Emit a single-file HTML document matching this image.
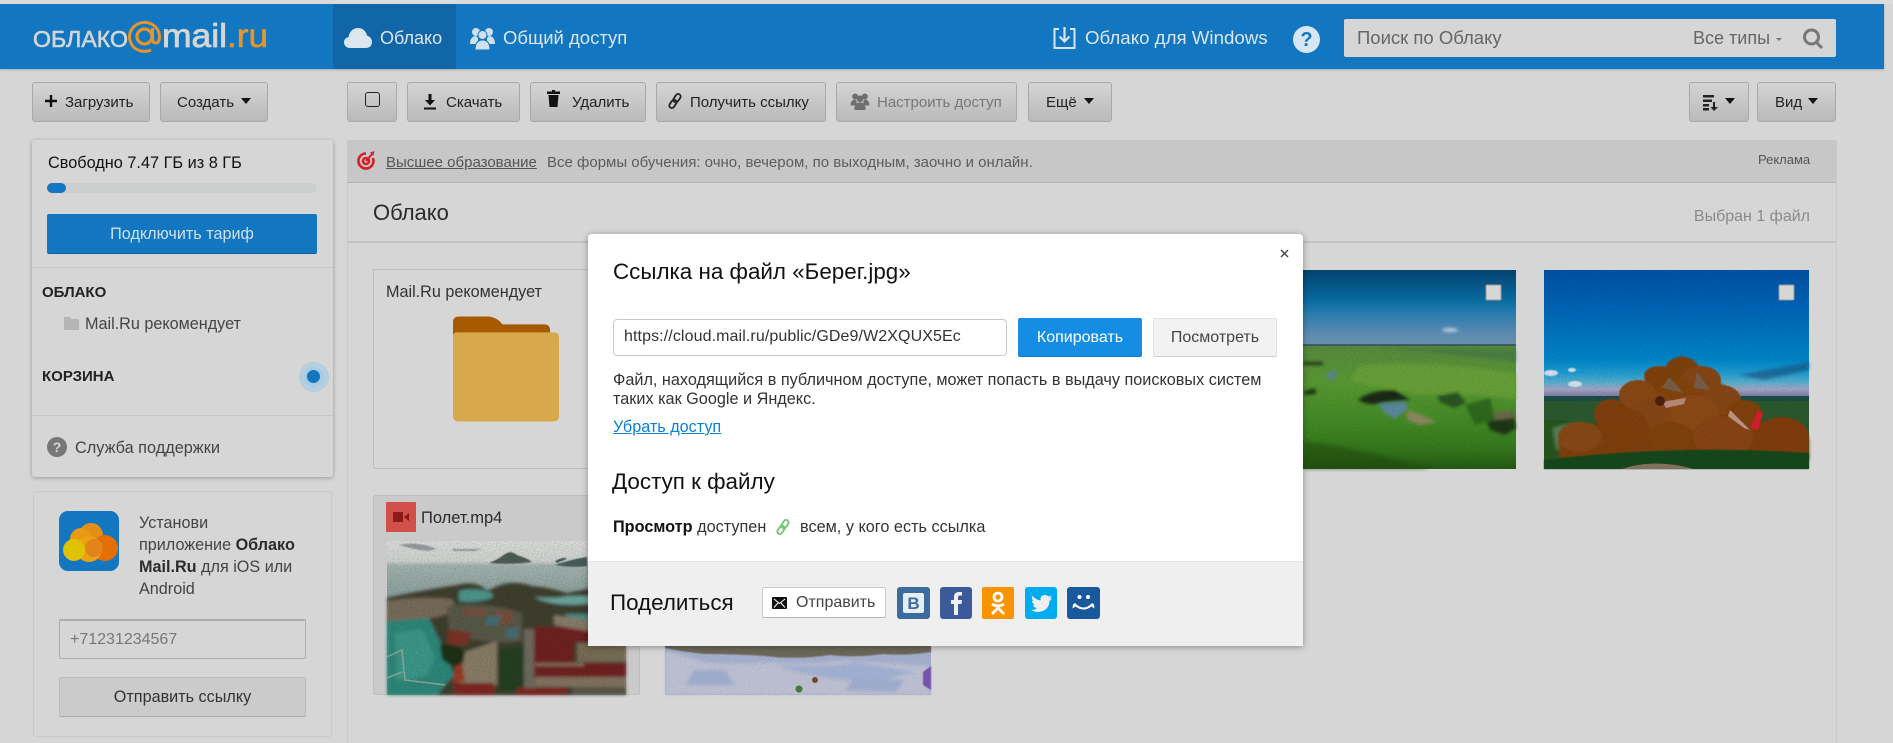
<!DOCTYPE html>
<html lang="ru"><head><meta charset="utf-8"><title>Облако Mail.Ru</title>
<style>
*{box-sizing:border-box}
html,body{margin:0;padding:0;width:1893px;height:743px;overflow:hidden;background:#d6d6d6;font-family:"Liberation Sans",Arial,sans-serif;color:#1c1c1c}
.a{position:absolute}
.t{position:absolute;white-space:nowrap}
.btn{position:absolute;top:82px;height:40px;border:1px solid #a9a9a9;border-radius:3px;background:linear-gradient(#d4d4d4,#bababa);font-size:15px;line-height:38px;white-space:nowrap;color:#222}
.btn span{top:0;line-height:40px}
svg{position:absolute;display:block;overflow:visible}
.caret{position:absolute;width:0;height:0;border-left:5px solid transparent;border-right:5px solid transparent;border-top:6px solid #111}
</style></head><body>
<svg width="0" height="0" style="left:0;top:0"><defs>
<linearGradient id="g1" x1="0" y1="0" x2="0" y2="1"><stop offset="0" stop-color="#dfe1de"/><stop offset=".13" stop-color="#d3d7d4"/><stop offset=".16" stop-color="#a7b6b2"/><stop offset=".38" stop-color="#8aa19d"/></linearGradient>
<linearGradient id="g2" x1="0" y1="0" x2="0" y2="1"><stop offset="0" stop-color="#03426f"/><stop offset=".4" stop-color="#086a9f"/><stop offset=".58" stop-color="#2a7cae"/><stop offset=".85" stop-color="#5c8ab0"/><stop offset="1" stop-color="#6a90b2"/></linearGradient>
<linearGradient id="g3" x1="0" y1="0" x2="0" y2="1"><stop offset="0" stop-color="#5a8b40"/><stop offset=".3" stop-color="#5a9b33"/><stop offset=".6" stop-color="#458e27"/><stop offset=".85" stop-color="#35781c"/><stop offset="1" stop-color="#265a14"/></linearGradient>
<linearGradient id="g4" x1="0" y1="0" x2="0" y2="1"><stop offset="0" stop-color="#0053a6"/><stop offset=".2" stop-color="#0067ba"/><stop offset=".45" stop-color="#0088cc"/><stop offset=".52" stop-color="#22a0d4"/><stop offset=".57" stop-color="#62b2d2"/><stop offset=".6" stop-color="#a9a6c6"/><stop offset=".635" stop-color="#7a7ea6"/></linearGradient>
<filter id="b1"><feGaussianBlur stdDeviation="1.500"/></filter>
<filter id="b2"><feGaussianBlur stdDeviation=".6"/></filter>
<filter id="b3"><feGaussianBlur stdDeviation="2"/></filter>
<filter id="n1" x="0" y="0" width="100%" height="100%"><feTurbulence type="fractalNoise" baseFrequency=".85" numOctaves="2" seed="4"/><feColorMatrix values="0 0 0 0 0 0 0 0 0 0 0 0 0 0 0 0 0 0 1.800 -.6"/></filter>
</defs></svg>
<div class="a" style="left:0;top:0;width:1893px;height:4px;background:#dcdcdc"></div>
<div class="a" style="left:0;top:4px;width:1884px;height:65px;background:#1276c0;box-shadow:0 1px 2px rgba(0,0,0,.2)"></div>
<div class="a" style="left:333px;top:4px;width:123px;height:65px;background:#1066a6"></div>

<svg style="left:20px;top:15px" width="280" height="50">
<text x="13" y="32" font-size="23" fill="#d6d6d6" stroke="#d6d6d6" stroke-width=".6" textLength="95" lengthAdjust="spacingAndGlyphs" font-family="Liberation Sans">ОБЛАКО</text>
<circle cx="124.500" cy="21.500" r="7.500" fill="none" stroke="#e6952a" stroke-width="3.200"/>
<path d="M132.500 13V24Q132.500 28 136 28T139.500 21A15 14.500 0 1 0 131 35" fill="none" stroke="#e6952a" stroke-width="3"/>
<text x="142" y="32" font-size="33" fill="#d6d6d6" stroke="#d6d6d6" stroke-width=".8" textLength="65" lengthAdjust="spacingAndGlyphs" font-family="Liberation Sans">mail</text>
<text x="207" y="32" font-size="33" fill="#e6952a" stroke="#e6952a" stroke-width=".6" textLength="41" lengthAdjust="spacingAndGlyphs" font-family="Liberation Sans">.ru</text>
</svg>

<svg style="left:344px;top:27px" width="28" height="22" viewBox="0 0 28 22"><path d="M6 21C2 21 0 18 0 15.500C0 12.500 2 10.500 4.500 10.300C5 5 9 1 14 1C18.500 1 22 4 23 8.500C26 9.500 28 12 28 15C28 18.500 25.500 21 22 21Z" fill="#dbe6ee"/></svg>
<div class="t" style="left:380px;top:27px;font-size:18px;line-height:22px;color:#dce6ee">Облако</div>
<svg style="left:470px;top:26px" width="25" height="24" viewBox="0 0 25 24" fill="#cfe0ed"><circle cx="6" cy="6" r="4"/><circle cx="19" cy="6" r="4"/><path d="M0 18C0 12 3 10 6 10L8 12 8 18ZM25 18C25 12 22 10 19 10L17 12 17 18Z"/><circle cx="12.500" cy="9" r="4.500" stroke="#1276c0"/><path d="M5 24C5 17 8 14 12.500 14S20 17 20 24Z" stroke="#1276c0"/></svg>
<div class="t" style="left:503px;top:27px;font-size:18.500px;line-height:22px;color:#dce6ee">Общий доступ</div>

<svg style="left:1053px;top:26px" width="23" height="23" viewBox="0 0 23 23" fill="none" stroke="#d9e6f0" stroke-width="2"><path d="M6 3H1.500V22H21.500V3H17"/><path d="M11.500 1V15M6.500 10.500L11.500 15.500L16.500 10.500" stroke-width="2.200"/></svg>
<div class="t" style="left:1085px;top:27px;font-size:18.700px;line-height:22px;color:#dce6ee">Облако для Windows</div>
<div class="a" style="left:1293px;top:26px;width:27px;height:27px;border-radius:50%;background:#d6e6f2;color:#1276c0;font-size:20px;font-weight:700;line-height:28px;text-align:center">?</div>

<div class="a" style="left:1344px;top:19px;width:492px;height:38px;background:#d6d6d6;border-radius:2px"></div>
<div class="t" style="left:1357px;top:27px;font-size:18.500px;line-height:22px;color:#666">Поиск по Облаку</div>
<div class="t" style="left:1693px;top:27px;font-size:18px;line-height:22px;color:#666">Все типы</div>
<div class="a" style="left:1776px;top:38px;width:0;height:0;border-left:3px solid transparent;border-right:3px solid transparent;border-top:3px solid #777"></div>
<svg style="left:1802px;top:28px" width="22" height="22" viewBox="0 0 22 22" fill="none" stroke="#777" stroke-width="3"><circle cx="9.500" cy="9" r="7"/><path d="M14 14L20 20"/></svg>

<!-- Toolbar -->
<div class="btn" style="left:32px;width:118px"><span class="t" style="left:32px">Загрузить</span></div>
<svg style="left:44px;top:94px" width="14" height="14"><path d="M7 1V13M1 7H13" stroke="#111" stroke-width="2.400"/></svg>
<div class="btn" style="left:160px;width:108px"><span class="t" style="left:16px">Создать</span></div><div class="caret" style="left:241px;top:98px"></div>
<div class="btn" style="left:347px;width:50px"></div>
<div class="a" style="left:365px;top:92px;width:15px;height:15px;border:1.500px solid #222;border-radius:3px"></div>
<div class="btn" style="left:407px;width:113px"><span class="t" style="left:38px">Скачать</span></div>
<svg style="left:424px;top:94px" width="12" height="16" viewBox="0 0 12 16"><path d="M4.500 0H7.500V6H11L6 11.500L1 6H4.500Z M0 13.500H12V15.500H0Z" fill="#111"/></svg>
<div class="btn" style="left:530px;width:116px"><span class="t" style="left:41px">Удалить</span></div>
<svg style="left:547px;top:90px" width="13" height="17" viewBox="0 0 13 17"><path d="M5 0H8V1.500H13V4H0V1.500H5ZM1.500 5H11.500L10.500 17H2.500Z" fill="#111"/></svg>
<div class="btn" style="left:656px;width:170px"><span class="t" style="left:33px">Получить ссылку</span></div>
<svg style="left:668px;top:93px" width="14" height="16" viewBox="0 0 14 16" fill="none" stroke="#222" stroke-width="1.800"><g transform="rotate(35 7 8)"><rect x="4.500" y="0" width="5" height="9" rx="2.500"/><rect x="4.500" y="7" width="5" height="9" rx="2.500"/></g></svg>
<div class="btn" style="left:836px;width:181px;color:#777"><span class="t" style="left:40px">Настроить доступ</span></div>
<svg style="left:849px;top:92px" width="22" height="18" viewBox="0 0 25 24" fill="#6e6e6e"><circle cx="6" cy="6" r="4"/><circle cx="19" cy="6" r="4"/><path d="M0 18C0 12 3 10 6 10L8 12 8 18ZM25 18C25 12 22 10 19 10L17 12 17 18Z"/><circle cx="12.500" cy="9" r="4.500"/><path d="M5 24C5 17 8 14 12.500 14S20 17 20 24Z"/></svg>
<div class="btn" style="left:1028px;width:84px"><span class="t" style="left:17px">Ещё</span></div><div class="caret" style="left:1084px;top:98px"></div>
<div class="btn" style="left:1689px;width:60px"></div>
<svg style="left:1703px;top:94px" width="16" height="17" viewBox="0 0 16 17" fill="#222"><path d="M0 1H11V3.500H0ZM0 5.500H9V8H0ZM0 10H6V12.500H0ZM0 14H6V16.500H0ZM10 8H12V13H15L11 17L7.500 13H10Z"/></svg>
<div class="caret" style="left:1725px;top:98px"></div>
<div class="btn" style="left:1757px;width:79px"><span class="t" style="left:17px">Вид</span></div><div class="caret" style="left:1808px;top:98px"></div>

<!-- Sidebar -->
<div class="a" style="left:32px;top:140px;width:301px;height:337px;background:#d6d6d6;border-radius:3px;box-shadow:0 1px 4px rgba(0,0,0,.3)"></div>
<div class="t" style="left:48px;top:153px;font-size:16.300px;line-height:20px;color:#111">Свободно 7.47 ГБ из 8 ГБ</div>
<div class="a" style="left:47px;top:183px;width:270px;height:10px;background:#cdcfcf;border-radius:5px"></div>
<div class="a" style="left:47px;top:183px;width:19px;height:10px;background:#1276c0;border-radius:5px"></div>
<div class="a" style="left:47px;top:214px;width:270px;height:40px;background:#1276c0;border-bottom:1px solid #0f62a0;border-radius:2px;color:#cfe0ed;font-size:16.200px;line-height:41px;text-align:center">Подключить тариф</div>
<div class="a" style="left:32px;top:267px;width:301px;height:1px;background:#c6c6c6"></div>
<div class="t" style="left:42px;top:284px;font-size:15px;font-weight:700;line-height:18px;color:#222">ОБЛАКО</div>
<svg style="left:64px;top:317px" width="15" height="13" viewBox="0 0 15 13"><path d="M0 0H6L7.500 2H15V13H0Z" fill="#b5b5b5"/></svg>
<div class="t" style="left:85px;top:314px;font-size:16.200px;line-height:20px;color:#444">Mail.Ru рекомендует</div>
<div class="t" style="left:42px;top:368px;font-size:15px;font-weight:700;line-height:18px;color:#222">КОРЗИНА</div>
<div class="a" style="left:299px;top:362px;width:30px;height:30px;border-radius:50%;background:#a9cbe2;box-shadow:inset 0 0 0 5px #b5cfe0"></div>
<div class="a" style="left:307px;top:370px;width:13px;height:13px;border-radius:50%;background:#1276c0"></div>
<div class="a" style="left:32px;top:415px;width:301px;height:1px;background:#c6c6c6"></div>
<div class="a" style="left:47px;top:437px;width:20px;height:20px;border-radius:50%;background:#777;color:#d6d6d6;font-size:14px;font-weight:700;line-height:20px;text-align:center">?</div>
<div class="t" style="left:75px;top:438px;font-size:16.300px;line-height:20px;color:#444">Служба поддержки</div>

<div class="a" style="left:33px;top:491px;width:299px;height:246px;border:1px solid #c9c9c9;border-radius:3px"></div>
<svg style="left:59px;top:511px" width="60" height="60" viewBox="0 0 60 60"><rect width="60" height="60" rx="9" fill="#1276c0"/><circle cx="32" cy="24" r="12" fill="#e38e16"/><circle cx="22" cy="28" r="11" fill="#e79a12"/><circle cx="46" cy="37" r="13" fill="#e36f06"/><circle cx="30" cy="38" r="13" fill="#eea016"/><circle cx="35" cy="37" r="9" fill="#e2841a"/><circle cx="15" cy="39" r="11" fill="#dfc204"/></svg>
<div class="t" style="left:139px;top:512px;font-size:16.200px;line-height:22px;color:#444;white-space:pre-line">Установи
приложение <b style="color:#2b2b2b">Облако</b>
<b style="color:#2b2b2b">Mail.Ru</b> для iOS или
Android</div>
<div class="a" style="left:59px;top:619px;width:247px;height:40px;border:1px solid #adadad;border-top-width:2px;border-radius:2px;background:#d6d6d6;color:#777;font-size:16px;line-height:37px;padding-left:10px">+71231234567</div>
<div class="a" style="left:59px;top:677px;width:247px;height:40px;border:1px solid #bbb;border-bottom:1px solid #aaa;border-radius:2px;background:#cbcbcb;color:#333;font-size:16.200px;line-height:38px;text-align:center">Отправить ссылку</div>

<!-- Main -->
<div class="a" style="left:347px;top:140px;width:1490px;height:603px;border-left:1px solid #c9c9c9;border-right:1px solid #c9c9c9"></div>
<div class="a" style="left:347px;top:140px;width:1489px;height:43px;background:#c7c7c7;border-bottom:1px solid #b2b2b2;border-radius:3px 3px 0 0"></div>
<svg style="left:356px;top:150px" width="20" height="20" viewBox="0 0 20 20" fill="none" stroke="#d42027" stroke-width="2.600"><path d="M10 3.500A7.500 7.500 0 1 0 16.800 8"/><circle cx="10" cy="11" r="3"/><path d="M10 11L17 3" stroke-width="2"/><path d="M14 2.500L18.500 1 17.500 5.500Z" fill="#d42027" stroke="none"/></svg>
<div class="t" style="left:386px;top:154px;font-size:15px;line-height:18px;color:#555;text-decoration:underline">Высшее образование</div>
<div class="t" style="left:547px;top:154px;font-size:15px;line-height:18px;color:#5c5c5c">Все формы обучения: очно, вечером, по выходным, заочно и онлайн.</div>
<div class="t" style="left:1758px;top:152px;font-size:13px;line-height:16px;color:#555">Реклама</div>
<div class="a" style="left:347px;top:183px;width:1489px;height:60px;border-bottom:2px solid #c3c3c3"></div>
<div class="t" style="left:373px;top:200px;font-size:22px;line-height:26px;color:#2a2a2a">Облако</div>
<div class="t" style="right:83px;top:207px;font-size:16px;line-height:20px;color:#8a8a8a">Выбран 1 файл</div>

<!-- Tile folder -->
<div class="a" style="left:373px;top:269px;width:267px;height:200px;border:1px solid #bfbfbf;border-radius:2px"></div>
<div class="t" style="left:386px;top:282px;font-size:16.200px;line-height:20px;color:#333">Mail.Ru рекомендует</div>
<svg style="left:453px;top:316px" width="106" height="106" viewBox="0 0 107 106"><path d="M0 20V6Q0 0 6 0H34Q44 0 50 8H92Q98 8 98 14V24H0Z" fill="#a55a00"/><path d="M4 16H102Q107 16 107 21V100Q107 106 101 106H6Q0 106 0 100V20Q0 16 4 16Z" fill="#d7a94c"/></svg>

<!-- Tile video -->
<div class="a" style="left:373px;top:495px;width:267px;height:200px;background:#cacaca;border:1px solid #bfbfbf;border-radius:2px"></div>
<div class="a" style="left:386px;top:502px;width:30px;height:30px;background:#d2504a;border-radius:1px"></div>
<svg style="left:393px;top:512px" width="16" height="10" viewBox="0 0 16 10"><path d="M0 0H10V10H0ZM11 5L16 1V9L11 5Z" fill="#8c1a1a"/></svg>
<div class="t" style="left:421px;top:508px;font-size:16.500px;line-height:20px;color:#2a2a2a">Полет.mp4</div>

<svg style="left:387px;top:541px" width="239" height="154" viewBox="0 0 239 154">
<rect width="239" height="154" fill="url(#g1)"/>
<g filter="url(#b2)">
<path d="M12 4Q30 0 50 8L40 10Q25 8 12 4ZM65 8H95L88 10H66Z" fill="#9a9fa2"/>
<path d="M102 22Q112 18 118 13Q124 9 130 14Q140 17 145 21Q125 24 102 22Z" fill="#4f5f58"/>
<path d="M168 20Q178 15 180 18L170 22ZM168 24Q185 18 200 16V25Q185 27 168 24Z" fill="#4a615b"/>
</g>
<g filter="url(#b1)">
<path d="M0 57Q30 50 70 44Q85 40 96 46Q100 52 108 46Q125 38 145 45Q160 46 180 52L200 48L239 50V154H0Z" fill="#413f2e"/>
<path d="M0 60Q30 55 65 58L70 70L50 76L0 82Z" fill="#7a6e5c"/>
<path d="M72 50Q90 46 104 52Q110 56 98 59Q85 62 72 60Z" fill="#4f9a90"/>
<path d="M147 56Q170 58 180 55H239V62L200 63Q165 66 147 56Z" fill="#6fa8a0"/>
<path d="M177 73H239V82H190Z" fill="#4f9088"/>
<path d="M0 80L42 77L50 94L57 109L67 134L50 154H0Z" fill="#2f8a7c"/>
<path d="M8 92L35 88L48 116L40 135L10 140Z" fill="#3e9a8c"/>
<path d="M60 65Q100 60 135 72L135 100Q100 105 62 92Z" fill="#5a5a48"/>
<path d="M76 68H100V74H76ZM108 70H125V82H108Z" fill="#7a4f3c"/>
<path d="M100 76L115 74 110 84 98 84ZM120 88L132 86 130 98 118 96Z" fill="#44707a"/>
<path d="M62 88L85 92 80 104H60Z" fill="#7c3428"/>
<path d="M53 104Q65 100 80 112L77 124Q65 128 55 118Z" fill="#1c3218"/>
<path d="M78 111L110 100 110 144 70 152Z" fill="#8a7f68"/>
<path d="M112 107L137 105 137 150H112Z" fill="#283f24"/>
<path d="M137 88H148V150H137Z" fill="#6f6c60"/>
<path d="M147 86H200L239 92V102H200V101L187 101V122H239V136H197V138H147Z" fill="#712020"/>
<path d="M190 102H239V121H190Z" fill="#7a6f58"/>
<path d="M148 122H197V125H148ZM148 136H239V146H148Z" fill="#857562"/>
<path d="M167 74L239 85V92L200 90L167 84Z" fill="#8a7f6c"/>
<path d="M67 142H107V154H67ZM130 147H180V154H130Z" fill="#802624"/>
<path d="M68 126L75 122 78 140 66 142Z" fill="#9a3c28"/>
<path d="M185 146H239V154H185Z" fill="#5c5848"/>
</g>
<path d="M0 116L15 109 18 139 58 144M0 137L15 131" stroke="#9fb0a8" stroke-width="1.500" fill="none" opacity=".85"/>
<rect width="239" height="154" filter="url(#n1)" opacity=".2"/>
</svg>

<!-- Tile bottom middle -->
<svg style="left:665px;top:600px" width="266" height="95" viewBox="0 0 266 95">
<rect width="266" height="95" fill="#a6b2d0"/>
<g filter="url(#b1)">
<path d="M40 62Q70 65 110 62Q140 66 180 60L266 66V95H0V50Z" fill="#c0c3d6"/>
<path d="M110 65Q165 68 190 62L250 72L210 82Q150 80 110 65Z" fill="#a4b4d6"/>
<path d="M30 70H60L70 85H20ZM190 78L240 80 230 92 180 90Z" fill="#a2b0d2"/>
</g>
<path d="M0 0H266V52Q240 56 218 54Q190 58 165 55Q130 60 100 56Q70 54 40 54Q20 52 0 48Z" fill="#6f6a5b" filter="url(#b2)"/>
<circle cx="150" cy="80" r="3" fill="#6f4f2c"/><circle cx="134" cy="89" r="3.500" fill="#4b7a38"/><path d="M258 72L266 66V90L258 85Z" fill="#7a54b0" filter="url(#b2)"/>
<rect width="266" height="95" filter="url(#n1)" opacity=".1"/>
</svg>

<!-- Tile river -->
<svg style="left:1250px;top:270px" width="266" height="199" viewBox="0 0 266 199">
<rect width="266" height="75" fill="url(#g2)"/>
<rect y="75" width="266" height="124" fill="url(#g3)"/>
<rect y="74" width="266" height="2" fill="#3c5f62"/>
<g filter="url(#b1)">
<ellipse cx="200" cy="60" rx="8" ry="2" fill="#b8ccdc"/>
<path d="M130 78L266 80V92L200 84Z" fill="#3f7448" opacity=".55"/>
<path d="M110 95Q190 90 266 104V130Q220 122 170 125Q130 118 100 110Z" fill="#73a83a" opacity=".6"/>
<path d="M53 92H73V95H53ZM53 122L65 118 66 124 55 125Z" fill="#1d3414"/>
<path d="M76 105Q82 100 87 100L84 110Q78 110 76 105Z" fill="#5a8aa0"/>
<path d="M108 130Q120 120 145 120L160 130L135 132Q120 137 108 130Z" fill="#1c2a12"/>
<path d="M128 134L155 132 158 138 145 149 134 142Z" fill="#5b8aa0"/>
<path d="M157 140L175 146 186 152 170 155 157 150Z" fill="#8f8a62"/>
<path d="M187 126L208 122 216 133 204 138 190 132Z" fill="#2c5520"/>
<path d="M235 146L262 140 266 158 255 165 240 160Z" fill="#1d3812"/>
<path d="M240 143L262 140 263 148 245 150Z" fill="#6f6a4c"/>
<path d="M215 135L240 128 245 150 225 155Z" fill="#2f6a1c"/>
</g>
<path d="M54 172Q100 175 180 199H54Z" fill="#214c10" opacity=".55" filter="url(#b3)"/>
<rect y="75" width="266" height="124" filter="url(#n1)" opacity=".15"/>
<rect x="236" y="15" width="15" height="15" rx="1" fill="#d6d6d6" stroke="#999"/>
</svg>

<!-- Tile hay -->
<svg style="left:1544px;top:270px" width="265" height="199" viewBox="0 0 265 199">
<rect width="265" height="199" fill="url(#g4)"/>
<path d="M0 126H265V199H0Z" fill="#1d4f48"/>
<path d="M0 131H265V199H0Z" fill="#2c5a30"/>
<path d="M0 150Q60 150 120 165H265V199H0Z" fill="#27561f"/>
<path d="M8 158Q30 150 50 155L40 180H12Z" fill="#7f9a7d" opacity=".6" filter="url(#b1)"/>
<g fill="#d9e6ef" filter="url(#b2)"><ellipse cx="7" cy="103" rx="7" ry="3"/><ellipse cx="31" cy="114" rx="7" ry="3"/><ellipse cx="28" cy="100" rx="4" ry="2"/></g>
<path d="M195 105L265 92 265 100 220 110Z" fill="#144f7f" opacity=".6" filter="url(#b1)"/>
<path d="M60 150L95 115 118 100 137 86 160 100 185 120 215 150 265 170V190H15V170Z" fill="#7f4010" filter="url(#b1)"/>
<g filter="url(#b2)">
<ellipse cx="138" cy="98" rx="16" ry="11" fill="#80420f"/>
<ellipse cx="115" cy="106" rx="15" ry="10" fill="#804210"/>
<ellipse cx="157" cy="110" rx="20" ry="14" fill="#864612"/>
<ellipse cx="94" cy="125" rx="19" ry="15" fill="#8b4a15"/>
<ellipse cx="132" cy="122" rx="19" ry="14" fill="#854410"/>
<ellipse cx="177" cy="130" rx="20" ry="15" fill="#874612"/>
<ellipse cx="67" cy="144" rx="17" ry="15" fill="#82410f"/>
<ellipse cx="200" cy="143" rx="18" ry="13" fill="#824210"/>
<ellipse cx="115" cy="147" rx="28" ry="20" fill="#874612"/>
<ellipse cx="150" cy="143" rx="24" ry="18" fill="#8e4c16"/>
<ellipse cx="86" cy="160" rx="19" ry="20" fill="#82410f"/>
<ellipse cx="127" cy="167" rx="23" ry="15" fill="#82420f"/>
<ellipse cx="36" cy="167" rx="22" ry="15" fill="#894812"/>
<ellipse cx="179" cy="167" rx="30" ry="21" fill="#8a4513"/>
<ellipse cx="238" cy="167" rx="27" ry="20" fill="#823e0e"/>
</g>
<path d="M125 107L140 123 118 118ZM153 102L166 120 150 118Z" fill="#6b7f88" opacity=".45"/>
<path d="M118 132Q128 130 142 128L140 134 122 138Z" fill="#b98e7a"/><circle cx="116" cy="131" r="5" fill="#4f2010"/>
<path d="M186 140L206 160 200 158 184 146Z" fill="#c29886"/>
<path d="M206 158L214 140 219 143 214 160Z" fill="#d6202f"/>
<path d="M0 190Q130 174 265 183V199H0Z" fill="#174a1a" filter="url(#b2)"/>
<path d="M78 199Q110 188 150 199Z" fill="#857662"/>
<rect width="265" height="199" filter="url(#n1)" opacity=".15"/>
<rect x="235" y="15" width="15" height="15" rx="1" fill="#d6d6d6" stroke="#999"/>
</svg>

<!-- Modal -->
<div class="a" style="left:588px;top:234px;width:715px;height:412px;background:#fff;border-radius:4px 4px 0 0;box-shadow:0 1px 7px rgba(0,0,0,.35)"></div>
<div class="a" style="left:588px;top:561px;width:715px;height:85px;background:#efefef;border-top:1px solid #e6e6e6"></div>
<svg style="left:1280px;top:249px" width="9" height="9"><path d="M1 1L8 8M8 1L1 8" stroke="#444" stroke-width="1.400"/></svg>
<div class="t" style="left:613px;top:258px;font-size:22.400px;line-height:28px;color:#111">Ссылка на файл «Берег.jpg»</div>
<div class="a" style="left:613px;top:319px;width:394px;height:37px;border:1px solid #c8c8c8;border-radius:4px;font-size:16px;line-height:34px;padding-left:10px;color:#333;letter-spacing:.1px">https://cloud.mail.ru/public/GDe9/W2XQUX5Ec</div>
<div class="a" style="left:1018px;top:318px;width:124px;height:39px;background:#168de5;border-bottom:1px solid #1279c6;border-radius:2px;color:#fff;font-size:16px;line-height:39px;text-align:center">Копировать</div>
<div class="a" style="left:1153px;top:318px;width:124px;height:39px;background:#f2f2f2;border:1px solid #e2e2e2;border-bottom:1px solid #d0d0d0;border-radius:2px;color:#444;font-size:16px;line-height:37px;text-align:center">Посмотреть</div>
<div class="t" style="left:613px;top:371px;font-size:16.240px;line-height:19px;color:#333;white-space:pre-line">Файл, находящийся в публичном доступе, может попасть в выдачу поисковых систем
таких как Google и Яндекс.</div>
<div class="t" style="left:613px;top:417px;font-size:16.200px;line-height:20px;color:#0a80d8;text-decoration:underline">Убрать доступ</div>
<div class="t" style="left:612px;top:468px;font-size:22.400px;line-height:28px;color:#111">Доступ к файлу</div>
<div class="t" style="left:613px;top:517px;font-size:16.250px;line-height:20px;color:#333"><b style="color:#111">Просмотр</b> доступен</div>
<svg style="left:776px;top:519px" width="14" height="16" viewBox="0 0 14 16" fill="none" stroke="#7cc67c" stroke-width="2"><g transform="rotate(35 7 8)"><rect x="4.500" y="0" width="5" height="9" rx="2.500"/><rect x="4.500" y="7" width="5" height="9" rx="2.500"/></g></svg>
<div class="t" style="left:800px;top:517px;font-size:16.250px;line-height:20px;color:#333">всем, у кого есть ссылка</div>
<div class="t" style="left:610px;top:589px;font-size:22.400px;line-height:28px;color:#111">Поделиться</div>
<div class="a" style="left:762px;top:587px;width:124px;height:31px;background:#fff;border:1px solid #ccc;border-bottom:1px solid #b5b5b5;border-radius:2px"></div>
<svg style="left:772px;top:597px" width="15" height="12" viewBox="0 0 15 12"><rect width="15" height="12" rx="1" fill="#111"/><path d="M2 2L7.500 6.500 13 2M2 10.500L6 6M13 10.500L9 6" stroke="#fff" stroke-width="1" fill="none"/></svg>
<div class="t" style="left:796px;top:593px;font-size:16px;line-height:20px;color:#444">Отправить</div>

<svg style="left:897px;top:587px" width="33" height="32" viewBox="0 0 33 32"><rect width="33" height="32" rx="3" fill="#3c6c9f"/><rect x="6" y="6" width="21" height="20" rx="2" fill="#e6edf3"/><text x="16.500" y="22" font-size="17" font-weight="700" fill="#3c6c9f" text-anchor="middle" font-family="Liberation Sans">В</text></svg>
<svg style="left:940px;top:587px" width="32" height="32" viewBox="0 0 32 32"><rect width="32" height="32" rx="3" fill="#3c5a9a"/><path d="M18 28V17H21.500L22 13H18V10.500Q18 8.500 20 8.500H22V5H19Q14 5 14 10V13H11V17H14V28Z" fill="#f0f0f0"/></svg>
<svg style="left:982px;top:587px" width="32" height="32" viewBox="0 0 32 32"><rect width="32" height="32" rx="2" fill="#f99400"/><circle cx="16" cy="10" r="4" fill="none" stroke="#fff" stroke-width="2.800"/><path d="M10 17Q16 21 22 17M16 19V21M10 27L16 21 22 27" fill="none" stroke="#fff" stroke-width="2.800"/></svg>
<svg style="left:1025px;top:587px" width="32" height="32" viewBox="0 0 32 32"><rect width="32" height="32" rx="3" fill="#00aced"/><path d="M7 8.500Q11 13 15.500 13.500Q15 8 20 8Q22 8 23.500 9.500L26.500 8.500L25 11.500L27 11Q26 13 24.500 14Q24 24 13 25Q9 25 6 23Q10 23 12 21Q8.500 20.500 8 18H10Q7 16.500 7 13.500L9 14Q6 12 7 8.500Z" fill="#efefef"/></svg>
<svg style="left:1067px;top:587px" width="33" height="32" viewBox="0 0 33 32"><rect width="33" height="32" rx="3" fill="#18589d"/><circle cx="12.500" cy="10" r="2" fill="#fff"/><circle cx="21" cy="10" r="2" fill="#fff"/><path d="M6 17.500L8 16Q16.500 25 25 16L27 17.500L27.500 21.500L24.500 19.500Q16.500 25.500 8.500 19.500L5.500 21.500Z" fill="#fff"/></svg>
</body></html>
